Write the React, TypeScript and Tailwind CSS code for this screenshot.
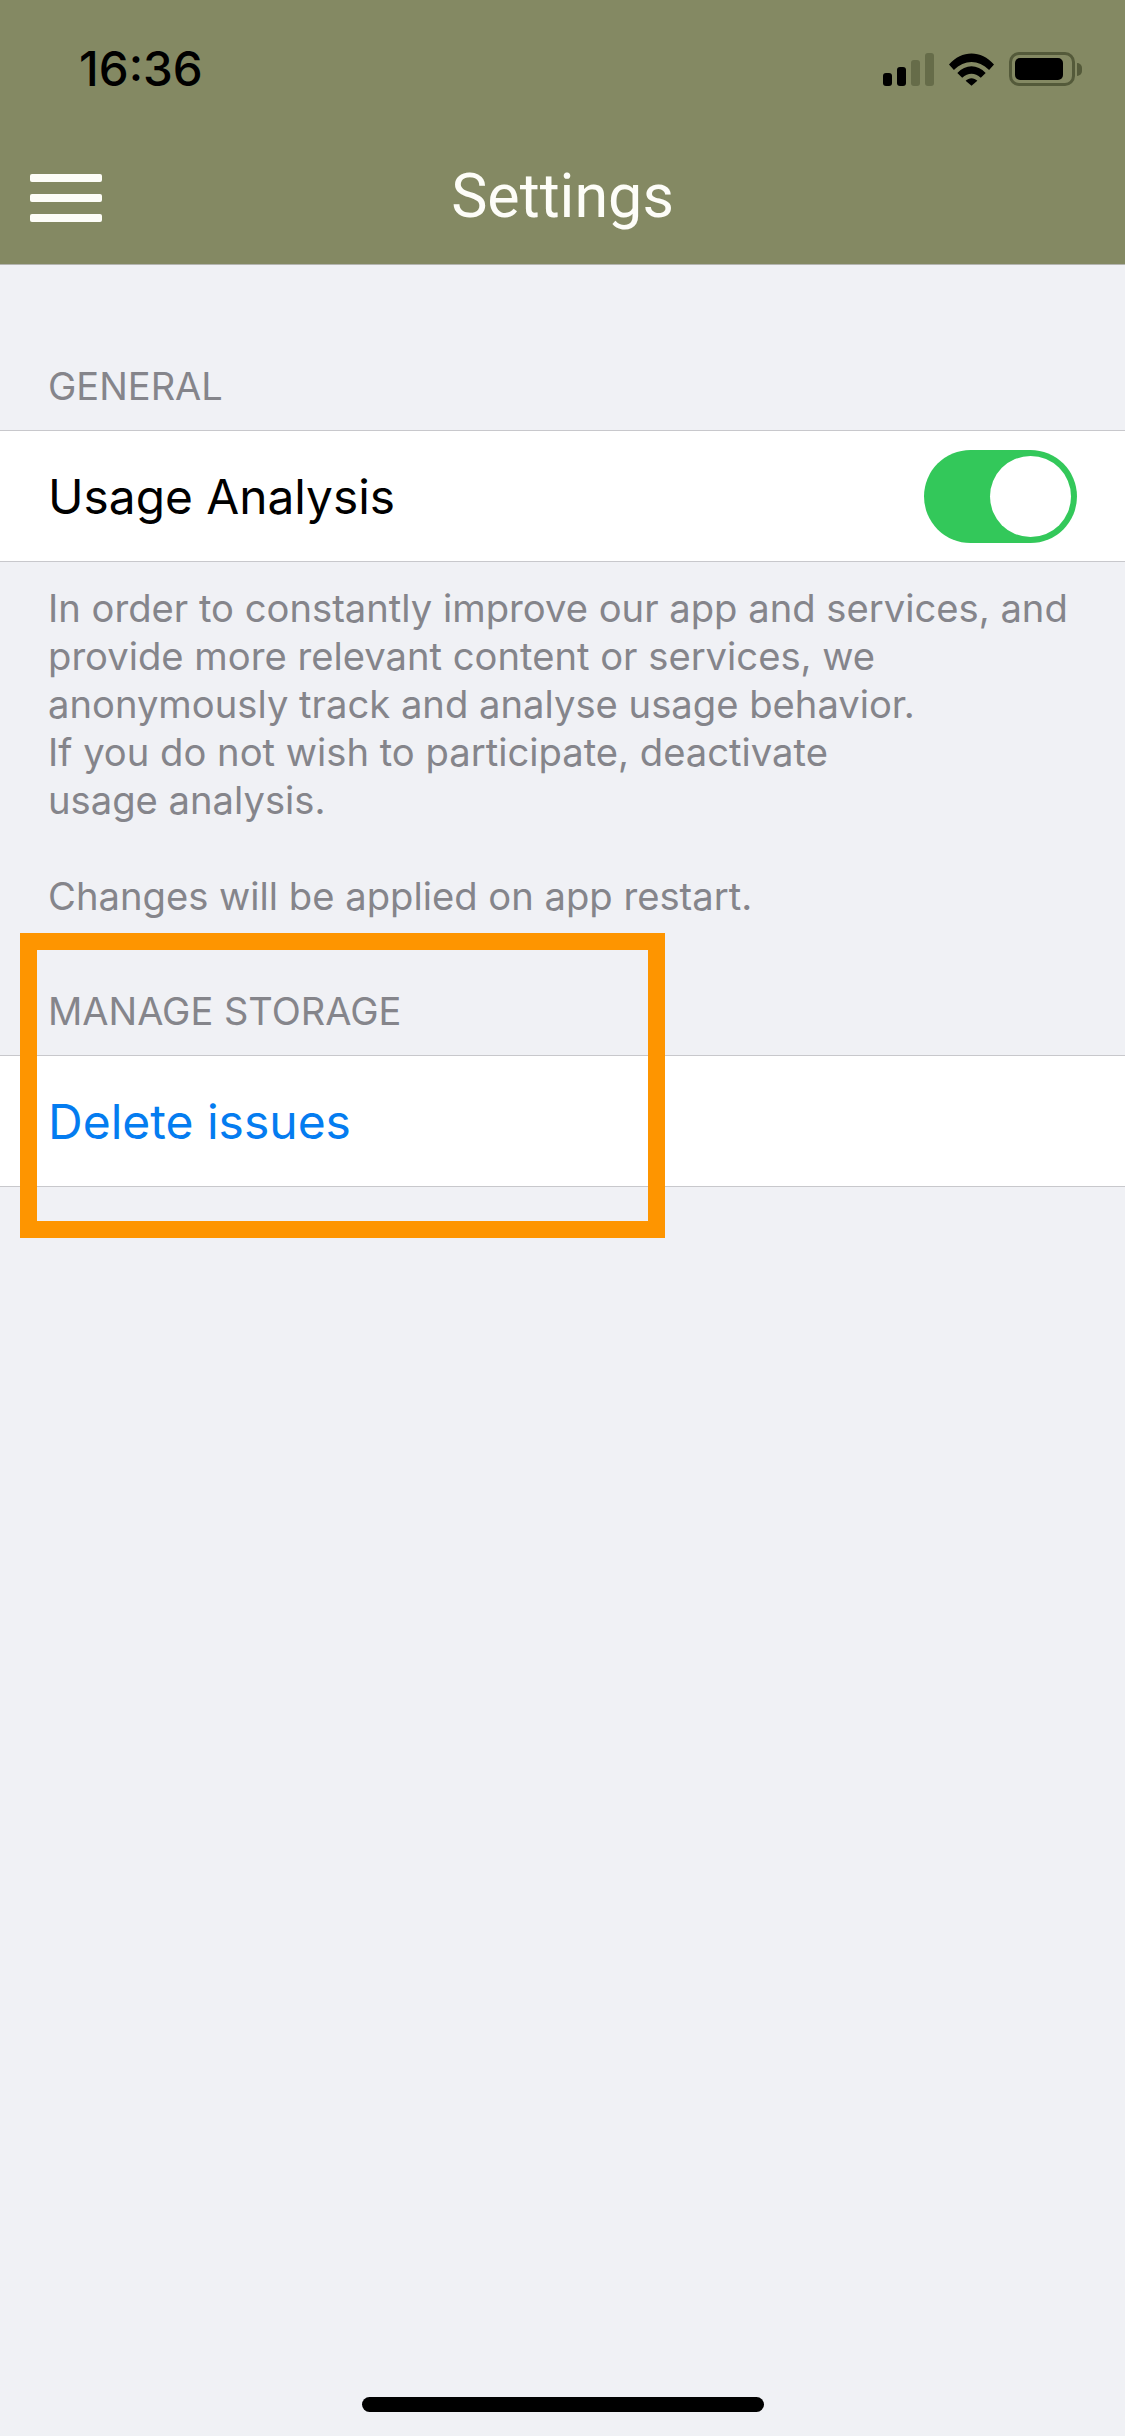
import React from "react";

const font = "font-['Inter','Liberation_Sans',sans-serif]";

const SignalIcon = () => (
  <svg width="51" height="33" viewBox="0 0 51 33">
    <rect x="0" y="20" width="9" height="13" rx="3" fill="#000" />
    <rect x="14" y="14" width="9" height="19" rx="3" fill="#000" />
    <rect x="28" y="7" width="9" height="26" rx="3" fill="#666c49" />
    <rect x="42" y="0" width="9" height="33" rx="3" fill="#666c49" />
  </svg>
);

const WifiIcon = () => (
  <svg width="45" height="33" viewBox="0 0 46 33">
    <path d="M0 11.5 C13 -3.5 33 -3.5 46 11.5 L41 17 C30 6 16 6 5 17 Z" fill="#000" />
    <path d="M8.5 20 C17 11 29 11 37.5 20 L32.5 25 C26.5 19.5 19.5 19.5 13.5 25 Z" fill="#000" />
    <path d="M17 28 C20.5 24.5 25.5 24.5 29 28 L23 33 Z" fill="#000" />
  </svg>
);

const BatteryIcon = () => (
  <div className="flex items-center gap-[2px]">
    <div className="w-[66px] h-[34px] rounded-[10px] border-[3px] border-[#545a3a] pl-[3px] pr-[9px] py-[3px]">
      <div className="w-full h-full rounded-[5px] bg-black" />
    </div>
    <div className="w-[5px] h-[13px] rounded-r-full bg-[#545a3a]" />
  </div>
);

const SectionLabel = ({ children, className }: { children: React.ReactNode; className: string }) => (
  <div className={`px-[48px] text-[38px] leading-[42px] text-[#85858b] ${className}`}>{children}</div>
);

export default function App() {
  return (
    <div className={`relative flex flex-col w-[1125px] h-[2436px] overflow-hidden bg-[#f0f1f5] ${font}`}>
      <header className="h-[265px] shrink-0 flex flex-col bg-[#848963] border-b border-[#b4b5b0]">
        <div className="h-[132px] flex items-start justify-between pl-[79px] pr-[43px] pt-[43px]">
          <span className="text-[47.5px] leading-[52px] font-medium text-black">16:36</span>
          <div className="flex items-center gap-[15px] pt-[9px]">
            <SignalIcon />
            <WifiIcon />
            <BatteryIcon />
          </div>
        </div>
        <div className="relative flex items-center justify-center h-[128px]">
          <div className="absolute left-[30px] top-[42px] flex flex-col gap-[12px]">
            <div className="w-[72px] h-[8px] rounded-[2px] bg-[#fdfdf8]" />
            <div className="w-[72px] h-[8px] rounded-[2px] bg-[#fdfdf8]" />
            <div className="w-[72px] h-[8px] rounded-[2px] bg-[#fdfdf8]" />
          </div>
          <h1 className="font-['Roboto',sans-serif] text-[61px] leading-[64px] font-normal text-[#fdfdf8]">Settings</h1>
        </div>
      </header>

      <SectionLabel className="pt-[100px] pb-[23px]">GENERAL</SectionLabel>
      <div className="flex items-center justify-between h-[132px] pl-[48px] pr-[48px] bg-white border-y border-[#c8c8cc]">
        <span className="pt-[2px] text-[47.8px] leading-[56px] text-black">Usage Analysis</span>
        <div className="flex items-center justify-end w-[153px] h-[93px] pr-[6px] rounded-full bg-[#33c85a]">
          <div className="w-[81px] h-[81px] rounded-full bg-white" />
        </div>
      </div>

      <p className="px-[48px] pt-[22px] text-[38.2px] leading-[48px] text-[#85858b]">
        In order to constantly improve our app and services, and
        <br />
        provide more relevant content or services, we
        <br />
        anonymously track and analyse usage behavior.
        <br />
        If you do not wish to participate, deactivate
        <br />
        usage analysis.
        <br />
        <br />
        Changes will be applied on app restart.
      </p>

      <SectionLabel className="pt-[70px] pb-[23px]">MANAGE STORAGE</SectionLabel>
      <div className="flex items-center h-[132px] px-[48px] bg-white border-y border-[#c8c8cc]">
        <span className="pt-[2px] text-[48px] leading-[56px] text-[#047cf0]">Delete issues</span>
      </div>

      <div className="absolute left-[20px] top-[933px] w-[645px] h-[305px] border-[17px] border-[#fe9500]" />

      <div className="absolute left-[362px] bottom-[24px] w-[402px] h-[15px] rounded-full bg-black" />
    </div>
  );
}
